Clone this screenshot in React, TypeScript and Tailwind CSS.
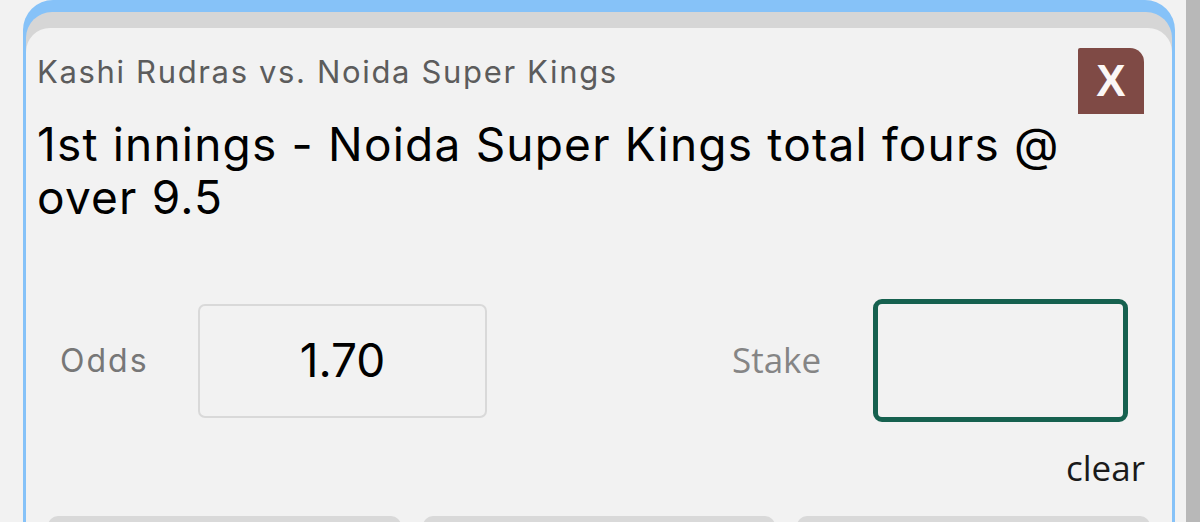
export default function App() {
  const title = "font-['Inter','Liberation_Sans',sans-serif]"
  return (
    <div className="flex h-[522px] w-[1200px] overflow-hidden bg-[#f2f2f2]">
      <div className="ml-[23px] flex w-[1152px] flex-col rounded-t-[30px] bg-[#86c2f8] px-[3px] pt-[12px]">
        <div className="flex flex-1 flex-col rounded-t-[26px] bg-[#d6d6d6] pt-[16px]">
          <div className={`flex flex-1 flex-col rounded-t-[24px] bg-[#f2f2f2] pl-[11px] pr-[28px] ${title}`}>
            <div className="flex items-start justify-between">
              <div className="mt-[24px] text-[31px] leading-[40px] tracking-[1.65px] text-[#5c5c5c]">
                Kashi Rudras vs. Noida Super Kings
              </div>
              <button className="mt-[20px] flex h-[66px] w-[66px] items-center justify-center rounded-tr-[14px] rounded-tl-[2px] bg-[#7f4a45] font-['Liberation_Sans',sans-serif] text-[44px] font-bold text-[#fbf7f6]">
                X
              </button>
            </div>
            <div className="mt-[4px] text-[46px] leading-[53px] tracking-[1.2px] text-black">
              1st innings - Noida Super Kings total fours @<br />over 9.5
            </div>
            <div className="mt-[75px] flex items-center">
              <div className="ml-[23px] w-[138px] text-[32px] tracking-[2px] text-[#777777]">Odds</div>
              <div className="flex h-[114px] w-[289px] items-center justify-center rounded-[7px] border-2 border-[#d9d9d9] text-[46px] text-black">
                1.70
              </div>
              <div className="ml-[245px] w-[141px] font-['Open_Sans',sans-serif] text-[35px] text-[#858585]">
                Stake
              </div>
              <div className="h-[123px] w-[255px] rounded-[9px] border-[5px] border-[#16614f]" />
            </div>
            <div className="mt-[26px] -mr-[1px] text-right font-['Open_Sans',sans-serif] text-[35px] leading-[40px] text-[#1a1a1a]">
              clear
            </div>
            <div className="-mr-[6px] mt-[28px] grid grid-cols-3 gap-[22px] pl-[11px]">
              <div className="h-[40px] rounded-t-[10px] bg-[#d9d9d9]" />
              <div className="h-[40px] rounded-t-[10px] bg-[#d9d9d9]" />
              <div className="h-[40px] rounded-t-[10px] bg-[#d9d9d9]" />
            </div>
          </div>
        </div>
      </div>
      <div className="ml-[11px] w-[14px] bg-[#b8b8b8]" />
    </div>
  )
}
